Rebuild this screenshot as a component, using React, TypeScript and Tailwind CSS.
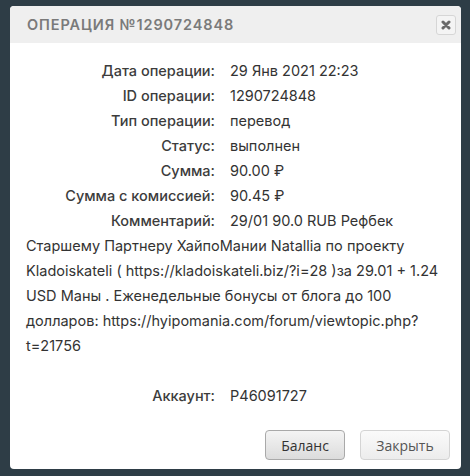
import React from 'react';

const rows: [string, string][] = [
  ['Дата операции:', '29 Янв 2021 22:23'],
  ['ID операции:', '1290724848'],
  ['Тип операции:', 'перевод'],
  ['Статус:', 'выполнен'],
  ['Сумма:', '90.00 ₽'],
  ['Сумма с комиссией:', '90.45 ₽'],
  ['Комментарий:', '29/01 90.0 RUB Рефбек'],
];

const commentLines = [
  'Старшему Партнеру ХайпоМании Natallia по проекту',
  'Kladoiskateli ( https://kladoiskateli.biz/?i=28 )за 29.01 + 1.24',
  'USD Маны . Еженедельные бонусы от блога до 100',
  'долларов: https://hyipomania.com/forum/viewtopic.php?',
  't=21756',
];

function Row({ label, value }: { label: string; value: string }) {
  return (
    <div className="flex h-[25px] items-center">
      <div className="w-[189px] shrink-0 text-right font-medium text-[#3c3c3c]">{label}</div>
      <div className="pl-[15px] text-[#333]">{value}</div>
    </div>
  );
}

export default function App() {
  return (
    <div className="h-[476px] w-[470px] bg-[#2e3d46] pt-[6px] pl-[10px]" style={{ fontFamily: 'Inter, "Noto Sans", sans-serif' }}>
      <div className="w-[451px] h-[463px] overflow-hidden rounded-[4px] bg-white flex flex-col">
        {/* Header */}
        <div className="flex h-[37px] items-center justify-between bg-[#efefef] pl-[17px] pr-[5px]">
          <span className="text-[14.5px] font-semibold tracking-[0.9px] text-[#7a7a7a]">ОПЕРАЦИЯ №1290724848</span>
          <button className="flex h-[20px] w-[20px] items-center justify-center rounded-[3px] border border-[#d6d6d6] bg-[#f4f4f4]">
            <svg width="10" height="10" viewBox="0 0 10 10">
              <path d="M2 2 L8 8 M8 2 L2 8" stroke="#6a6a6a" strokeWidth="3" strokeLinecap="round" />
            </svg>
          </button>
        </div>

        {/* Body */}
        <div className="flex-1 px-[16px] pt-[15px] text-[14.5px] leading-[25px]">
          {rows.map(([l, v]) => (
            <Row key={l} label={l} value={v} />
          ))}
          <div className="text-[#333]">
            {commentLines.map((line) => (
              <div key={line} className="whitespace-nowrap">{line}</div>
            ))}
          </div>
          <div className="h-[25px]" />
          <Row label="Аккаунт:" value="P46091727" />

          <div className="mt-[22px] flex justify-end gap-[15px]" style={{ fontFamily: '"Open Sans", sans-serif' }}>
            <button className="h-[30px] w-[80px] rounded-[4px] border border-[#a9a9a9] bg-gradient-to-b from-[#f4f4f4] to-[#dcdcdc] text-[14px] text-[#333]">
              Баланс
            </button>
            <button className="mr-[-5px] h-[30px] w-[90px] rounded-[4px] border border-[#d4d4d4] bg-gradient-to-b from-[#fafafa] to-[#ececec] text-[14px] text-[#555]">
              Закрыть
            </button>
          </div>
        </div>
      </div>
    </div>
  );
}
